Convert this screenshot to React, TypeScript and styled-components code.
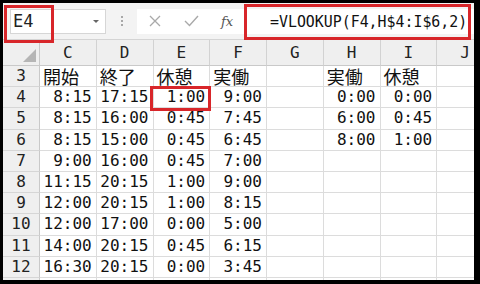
import styled, { createGlobalStyle } from "styled-components";

const GlobalStyle = createGlobalStyle`
  html, body {
    margin: 0;
    padding: 0;
    background: #000;
  }
  body {
    width: 480px;
    height: 284px;
    overflow: hidden;
  }
`;

const MONO = `"DejaVu Sans Mono", "Noto Sans CJK JP", monospace`;
const JP = `"Noto Sans CJK JP", sans-serif`;
const RED = "#d8262a";

const cols = ["C", "D", "E", "F", "G", "H", "I", "J"];

const rows: { n: number; cells: string[] }[] = [
  { n: 3, cells: ["開始", "終了", "休憩", "実働", "", "実働", "休憩", ""] },
  { n: 4, cells: ["8:15", "17:15", "1:00", "9:00", "", "0:00", "0:00", ""] },
  { n: 5, cells: ["8:15", "16:00", "0:45", "7:45", "", "6:00", "0:45", ""] },
  { n: 6, cells: ["8:15", "15:00", "0:45", "6:45", "", "8:00", "1:00", ""] },
  { n: 7, cells: ["9:00", "16:00", "0:45", "7:00", "", "", "", ""] },
  { n: 8, cells: ["11:15", "20:15", "1:00", "9:00", "", "", "", ""] },
  { n: 9, cells: ["12:00", "20:15", "1:00", "8:15", "", "", "", ""] },
  { n: 10, cells: ["12:00", "17:00", "0:00", "5:00", "", "", "", ""] },
  { n: 11, cells: ["14:00", "20:15", "0:45", "6:15", "", "", "", ""] },
  { n: 12, cells: ["16:30", "20:15", "0:00", "3:45", "", "", "", ""] },
];

const Frame = styled.div`
  box-sizing: border-box;
  width: 480px;
  height: 284px;
  padding: 3px 6px 4px 3px;
  background: #000;
`;

const Sheet = styled.div`
  position: relative;
  height: 100%;
  background: #fff;
  overflow: hidden;
  display: flex;
  flex-direction: column;
`;

const Toolbar = styled.div`
  height: 37px;
  flex: none;
  background: #f3f3f3;
  border-bottom: 1px solid #d4d4d4;
  box-sizing: border-box;
  display: flex;
  align-items: center;
  padding: 0 0 0 7px;
`;

const NameBox = styled.div`
  box-sizing: border-box;
  width: 96px;
  height: 25px;
  background: #fff;
  border: 1px solid #d6d6d6;
  display: flex;
  align-items: center;
  justify-content: space-between;
  padding: 0 6px 0 2px;
  font-family: ${MONO};
  font-size: 17px;
  line-height: 1;
  color: #222;
`;

const Caret = styled.span`
  width: 0;
  height: 0;
  border-left: 3px solid transparent;
  border-right: 3px solid transparent;
  border-top: 3px solid #666;
`;

const Dots = styled.div`
  width: 31px;
  display: flex;
  flex-direction: column;
  align-items: center;
  gap: 2px;

  span {
    width: 2px;
    height: 2px;
    background: #a8a8a8;
  }
`;

const FormulaBox = styled.div`
  flex: 1;
  height: 25px;
  background: #fff;
  display: flex;
  align-items: center;
  min-width: 0;
`;

const IconSlot = styled.div`
  flex: none;
  width: 36px;
  display: flex;
  justify-content: center;
  align-items: center;
`;

const Fx = styled.span`
  font-family: "DejaVu Serif", "Liberation Serif", serif;
  font-style: italic;
  font-size: 13px;
  color: #555;
`;

const FormulaText = styled.div`
  margin-left: 25px;
  font-family: ${MONO};
  font-size: 14.9px;
  line-height: 1;
  color: #111;
  white-space: nowrap;
  transform: scaleY(1.12);
`;

const Grid = styled.div`
  flex: 1;
  display: grid;
  grid-template-columns: 37px repeat(8, 56.75px);
  grid-template-rows: 26px repeat(11, 21.2px);
`;

const Corner = styled.div`
  position: relative;
  background: #efefef;
  border-right: 1px solid #c9c9c9;
  border-bottom: 1px solid #c9c9c9;

  &::after {
    content: "";
    position: absolute;
    right: 3px;
    bottom: 3px;
    width: 0;
    height: 0;
    border-left: 13px solid transparent;
    border-bottom: 13px solid #b5b5b5;
  }
`;

const ColHead = styled.div`
  background: #efefef;
  border-right: 1px solid #d2d2d2;
  border-bottom: 1px solid #c9c9c9;
  display: flex;
  align-items: center;
  justify-content: center;
  font-family: ${MONO};
  font-size: 16px;
  line-height: 1;
  color: #222;
`;

const RowHead = styled.div`
  background: #efefef;
  border-right: 1px solid #c9c9c9;
  border-bottom: 1px solid #d6d6d6;
  display: flex;
  align-items: center;
  justify-content: center;
  font-family: ${MONO};
  font-size: 16px;
  line-height: 1;
  color: #222;
`;

const Cell = styled.div<{ $jp: boolean }>`
  border-right: 1px solid #dcdcdc;
  border-bottom: 1px solid #dcdcdc;
  display: flex;
  align-items: center;
  justify-content: ${(p) => (p.$jp ? "flex-start" : "flex-end")};
  padding: ${(p) => (p.$jp ? "0 0 0 3px" : "0 4px 0 0")};
  font-family: ${(p) => (p.$jp ? JP : MONO)};
  font-size: ${(p) => (p.$jp ? "18px" : "16px")};
  line-height: 1;
  color: #111;
  white-space: nowrap;
`;

const Mark = styled.div<{ $x: number; $y: number; $w: number; $h: number }>`
  position: absolute;
  left: ${(p) => p.$x}px;
  top: ${(p) => p.$y}px;
  width: ${(p) => p.$w}px;
  height: ${(p) => p.$h}px;
  box-sizing: border-box;
  border: 3px solid ${RED};
  pointer-events: none;
`;

const isJp = (s: string) => /[^\x00-\x7f]/.test(s);

export default function App() {
  return (
    <>
      <GlobalStyle />
      <Frame>
        <Sheet>
          <Toolbar>
            <NameBox>
              <span>E4</span>
              <Caret />
            </NameBox>
            <Dots>
              <span />
              <span />
              <span />
            </Dots>
            <FormulaBox>
              <IconSlot>
                <svg width="12" height="12" viewBox="0 0 12 12">
                  <path d="M1 1 L11 11 M11 1 L1 11" stroke="#a9a9a9" strokeWidth="1.3" />
                </svg>
              </IconSlot>
              <IconSlot>
                <svg width="15" height="12" viewBox="0 0 15 12">
                  <path d="M1 6 L5.5 10.5 L14 1" stroke="#a9a9a9" strokeWidth="1.4" fill="none" />
                </svg>
              </IconSlot>
              <IconSlot>
                <Fx>fx</Fx>
              </IconSlot>
              <FormulaText>=VLOOKUP(F4,H$4:I$6,2)</FormulaText>
            </FormulaBox>
          </Toolbar>
          <Grid>
            <Corner />
            {cols.map((c) => (
              <ColHead key={c}>{c}</ColHead>
            ))}
            {rows.flatMap((r) => [
              <RowHead key={`h${r.n}`}>{r.n}</RowHead>,
              ...r.cells.map((v, i) => (
                <Cell key={`${r.n}-${i}`} $jp={isJp(v)}>
                  {v}
                </Cell>
              )),
            ])}
            <RowHead />
            {cols.map((c) => (
              <Cell key={`13-${c}`} $jp={false} />
            ))}
          </Grid>
          <Mark $x={1} $y={2} $w={50} $h={38} />
          <Mark $x={241} $y={1} $w={227} $h={36} />
          <Mark $x={147} $y={83} $w={61} $h={25} />
        </Sheet>
      </Frame>
    </>
  );
}
